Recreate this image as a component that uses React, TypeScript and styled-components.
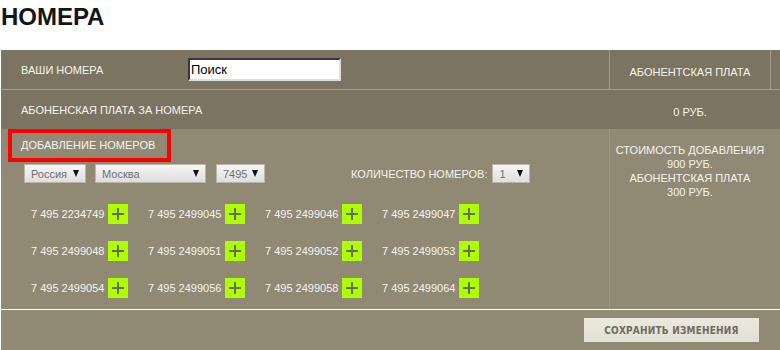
import React from "react";
import styled, { createGlobalStyle } from "styled-components";

const GlobalStyle = createGlobalStyle`
  html, body {
    margin: 0;
    padding: 0;
    background: #ffffff;
    overflow: hidden;
  }
  body {
    font-family: "Liberation Sans", Arial, sans-serif;
  }
`;

const Page = styled.div`
  padding-left: 1px;
  width: 779px;
`;

const Title = styled.h1`
  margin: 3px 0 19px 0;
  font-size: 24px;
  line-height: 28px;
  font-weight: bold;
  color: #151515;
`;

const Table = styled.div`
  width: 779px;
  color: #f4f4ef;
  font-size: 11px;
`;

const Row = styled.div<{ $tone: "dark" | "light"; $height: number; $line?: string }>`
  display: flex;
  height: ${({ $height }) => $height}px;
  background: ${({ $tone }) => ($tone === "dark" ? "#7a7460" : "#908a74")};
  border-bottom: ${({ $line }) => ($line ? `1px solid ${$line}` : "none")};
`;

const LeftCell = styled.div<{ $divider?: string }>`
  flex: 0 0 609px;
  box-sizing: border-box;
  padding-left: 20px;
  border-right: 1px solid ${({ $divider }) => $divider || "transparent"};
`;

const RightCell = styled.div<{ $divider?: string }>`
  flex: 0 0 161px;
  box-sizing: border-box;
  text-align: center;
  border-right: 1px solid ${({ $divider }) => $divider || "transparent"};
`;

const InlineCell = styled(LeftCell)`
  display: flex;
  align-items: center;
`;

const CenterCell = styled(RightCell)`
  display: flex;
  align-items: center;
  justify-content: center;
  padding-top: 5px;
`;

const Label = styled.span<{ $width?: number }>`
  width: ${({ $width }) => ($width ? `${$width}px` : "auto")};
  text-transform: uppercase;
`;

const SearchInput = styled.input`
  box-sizing: border-box;
  width: 153px;
  height: 23px;
  margin-top: -1px;
  padding: 0 1px;
  border: 2px inset #9a9a9a;
  border-top-color: #8c8c8c;
  border-left-color: #8c8c8c;
  border-right-color: #dedede;
  border-bottom-color: #dedede;
  background: #ffffff;
  font-family: "Liberation Sans", Arial, sans-serif;
  font-size: 13px;
  color: #000;
  outline: none;
`;

const AddSection = styled(LeftCell)`
  padding-left: 0;
  display: flex;
  flex-direction: column;
  align-items: flex-start;
`;

const Highlight = styled.div`
  margin-left: 7px;
  border: 4px solid #ff0000;
  padding: 6px 12px 6px 9px;
  line-height: 13px;
`;

const Filters = styled.div`
  display: flex;
  align-items: center;
  margin: 2px 0 0 23px;
`;

const Select = styled.div<{ $width: number }>`
  box-sizing: border-box;
  width: ${({ $width }) => $width}px;
  height: 19px;
  margin-right: 9px;
  padding: 0 6px 0 6px;
  display: flex;
  align-items: center;
  justify-content: space-between;
  background: linear-gradient(#f6f6f6, #dedede);
  border: 1px solid #b9b6a8;
  color: #6f6f6f;
  font-size: 11px;
`;

const Arrow = styled.span`
  width: 0;
  height: 0;
  border-left: 3.5px solid transparent;
  border-right: 3.5px solid transparent;
  border-top: 7px solid #111;
`;

const QtyGroup = styled.div`
  display: flex;
  align-items: center;
  margin-left: 77px;
  gap: 5px;
`;

const NumberGrid = styled.div`
  display: grid;
  grid-template-columns: repeat(4, 97px);
  column-gap: 20px;
  row-gap: 17px;
  margin: 21px 0 0 30px;
`;

const NumberItem = styled.div`
  display: flex;
  align-items: center;
  justify-content: space-between;
  height: 20px;
  font-size: 11px;
`;

const AddButton = styled.button`
  width: 20px;
  height: 20px;
  padding: 0;
  border: none;
  background: #adff00;
  display: flex;
  align-items: center;
  justify-content: center;
  cursor: pointer;
`;

const PriceInfo = styled(RightCell)`
  padding-top: 14px;
  line-height: 14px;
`;

const Footer = styled.div`
  background: #908a74;
  border-top: 1px solid #ffffff;
  padding: 8px 0 0 583px;
  box-sizing: border-box;
  height: 41px;
`;

const SaveButton = styled.button`
  width: 175px;
  height: 24px;
  padding: 0;
  border: none;
  background: linear-gradient(#ebe8de, #e2dfd3);
  color: #6e6c5c;
  font-family: "DejaVu Sans Condensed", "DejaVu Sans", sans-serif;
  font-weight: bold;
  font-size: 10px;
  letter-spacing: 0.2px;
  text-transform: uppercase;
  cursor: pointer;
`;

const numbers = [
  "7 495 2234749",
  "7 495 2499045",
  "7 495 2499046",
  "7 495 2499047",
  "7 495 2499048",
  "7 495 2499051",
  "7 495 2499052",
  "7 495 2499053",
  "7 495 2499054",
  "7 495 2499056",
  "7 495 2499058",
  "7 495 2499064",
];

const PlusIcon = () => (
  <svg width="14" height="14" viewBox="0 0 14 14">
    <path d="M7 1v12M1 7h12" stroke="#6b6a58" strokeWidth="2" fill="none" />
  </svg>
);

const App = () => {
  return (
    <Page>
      <GlobalStyle />
      <Title>НОМЕРА</Title>
      <Table>
        <Row $tone="dark" $height={39} $line="#a8a28d">
          <InlineCell $divider="#a29c87">
            <Label $width={167}>Ваши номера</Label>
            <SearchInput defaultValue="Поиск" />
          </InlineCell>
          <CenterCell $divider="#a29c87">АБОНЕНТСКАЯ ПЛАТА</CenterCell>
        </Row>
        <Row $tone="dark" $height={39}>
          <InlineCell>
            <Label>Абоненская плата за номера</Label>
          </InlineCell>
          <CenterCell>0 РУБ.</CenterCell>
        </Row>
        <Row $tone="light" $height={180}>
          <AddSection $divider="#9c9681">
            <Highlight>ДОБАВЛЕНИЕ НОМЕРОВ</Highlight>
            <Filters>
              <Select $width={62}>
                Россия <Arrow />
              </Select>
              <Select $width={111} style={{ marginRight: 10 }}>
                Москва <Arrow />
              </Select>
              <Select $width={49}>
                7495 <Arrow />
              </Select>
              <QtyGroup>
                <span>КОЛИЧЕСТВО НОМЕРОВ:</span>
                <Select $width={38}>
                  1 <Arrow />
                </Select>
              </QtyGroup>
            </Filters>
            <NumberGrid>
              {numbers.map((n) => (
                <NumberItem key={n}>
                  <span>{n}</span>
                  <AddButton aria-label="Добавить">
                    <PlusIcon />
                  </AddButton>
                </NumberItem>
              ))}
            </NumberGrid>
          </AddSection>
          <PriceInfo>
            СТОИМОСТЬ ДОБАВЛЕНИЯ
            <br />
            900 РУБ.
            <br />
            АБОНЕНТСКАЯ ПЛАТА
            <br />
            300 РУБ.
          </PriceInfo>
        </Row>
        <Footer>
          <SaveButton>Сохранить изменения</SaveButton>
        </Footer>
      </Table>
    </Page>
  );
};

export default App;
